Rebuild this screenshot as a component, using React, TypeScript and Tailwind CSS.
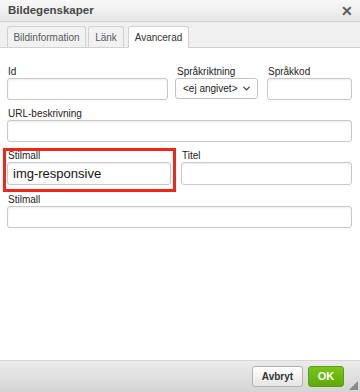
import { ChevronDown } from 'lucide-react'

const font = { fontFamily: '"Liberation Sans", Arial, Helvetica, sans-serif' }

function Field({ label, className = '', value = '' }: { label: string; className?: string; value?: string }) {
  return (
    <div className={className}>
      <label className="block text-[10px] leading-[13px] text-[#222] pl-[1px]">{label}</label>
      <div className="h-[22px] rounded-[3px] border border-[#c9c9c9] bg-white shadow-[inset_0_1px_2px_rgba(0,0,0,0.08)] px-[5px] flex items-center text-[13px] text-[#111]">
        {value}
      </div>
    </div>
  )
}

export default function App() {
  return (
    <div className="w-[360px] h-[392px] bg-white flex flex-col overflow-hidden" style={font}>
      {/* Titel */}
      <div className="h-[22px] flex items-center justify-between px-[8px] bg-gradient-to-b from-[#f8f8f8] to-[#e6e6e6] border-b border-[#d1d1d1]">
        <span className="text-[11.5px] font-bold text-[#474747]">Bildegenskaper</span>
        <span className="text-[14px] font-bold text-[#5c5c5c] leading-none mr-[-1px]">✕</span>
      </div>

      {/* Flikar */}
      <div className="h-[26px] bg-[#f0f0f0] border-b border-[#d1d1d1] flex items-end px-[7px] gap-[2px]">
        <div className="h-[21px] w-[79px] flex items-center justify-center bg-[#f1f1f1] border border-b-0 border-[#d1d1d1] rounded-t-[3px] text-[10px] text-[#595959]">Bildinformation</div>
        <div className="h-[21px] w-[36px] flex items-center justify-center bg-[#f1f1f1] border border-b-0 border-[#d1d1d1] rounded-t-[3px] text-[10px] text-[#595959]">Länk</div>
        <div className="h-[22px] w-[61px] ml-[2px] mb-[-1px] flex items-center justify-center bg-white border border-b-0 border-[#d1d1d1] rounded-t-[3px] text-[10px] text-[#333]">Avancerad</div>
      </div>

      {/* Innehåll */}
      <div className="flex-1 pl-[7px] pr-[8px] pt-[17px]">
        <div className="flex items-start">
          <Field label="Id" className="w-[161px]" />
          <div className="w-[83px] ml-[7px]">
            <label className="block text-[10px] leading-[13px] text-[#222] pl-[2px]">Språkriktning</label>
            <div className="h-[21px] rounded-[3px] border border-[#c2c2c2] bg-white flex items-center justify-between pl-[7px] pr-[5px] text-[10px] text-[#222] whitespace-nowrap">
              <span>&lt;ej angivet&gt;</span>
              <ChevronDown size={11} strokeWidth={2.5} className="text-[#333] shrink-0" />
            </div>
          </div>
          <Field label="Språkkod" className="w-[85px] ml-[9px]" />
        </div>

        <Field label="URL-beskrivning" className="mt-[7px]" />

        <div className="flex items-start mt-[7px]">
          <div className="w-[164px] relative">
            <Field label="Stilmall" value="img-responsive" className="[&>div]:h-[23px]" />
            <div className="absolute left-[-4px] right-[-5px] top-[-1px] bottom-[-7px] border-[3px] border-[#f0261b] pointer-events-none" />
          </div>
          <Field label="Titel" className="flex-1 ml-[10px] [&>div]:h-[23px]" />
        </div>

        <Field label="Stilmall" className="mt-[8px]" />
      </div>

      {/* Sidfot */}
      <div className="h-[32px] relative border-t border-[#d6d6d6] bg-gradient-to-b from-[#ebebeb] to-[#d4d4d4] flex items-center justify-end pr-[16px] gap-[5px]">
        <button className="h-[21px] w-[51px] rounded-[3px] border border-[#b1b1b1] bg-gradient-to-b from-white to-[#e4e4e4] text-[10px] font-bold text-[#333]">Avbryt</button>
        <button className="h-[21px] w-[36px] rounded-[3px] border border-[#5c9e0b] bg-gradient-to-b from-[#7bc51b] to-[#5fa80a] text-[11px] font-bold text-white">OK</button>
        <svg className="absolute right-[2px] bottom-[2px]" width="9" height="9" viewBox="0 0 9 9">
          <polygon points="9,0 9,9 0,9" fill="#8a8a8a" />
        </svg>
      </div>
    </div>
  )
}
